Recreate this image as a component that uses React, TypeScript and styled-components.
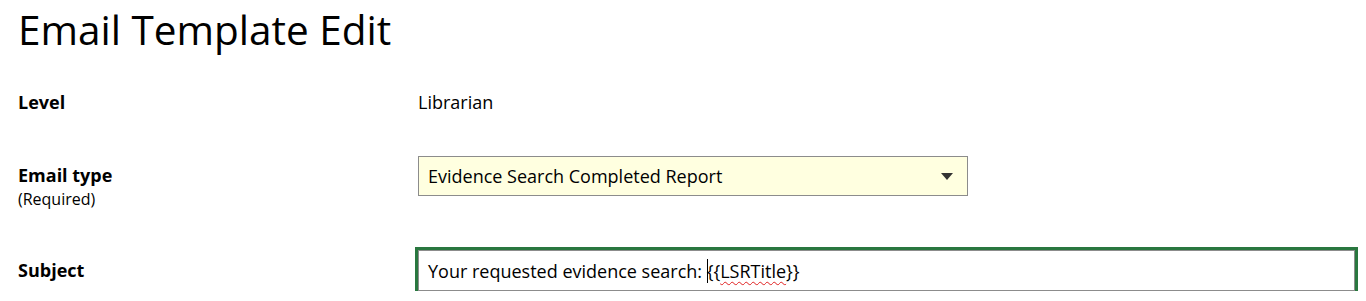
import React from 'react';
import styled, { createGlobalStyle } from 'styled-components';

const GlobalStyle = createGlobalStyle`
  body {
    margin: 0;
    background: #ffffff;
    font-family: 'Open Sans', 'Noto Sans', sans-serif;
    color: #000000;
  }
`;

const Page = styled.main`
  padding: 6px 11px 0 18px;
`;

const Title = styled.h1`
  margin: 0;
  font-size: 40.5px;
  line-height: 48px;
  font-weight: 400;
`;

const Row = styled.div<{ $top: number }>`
  display: grid;
  grid-template-columns: 400px 937px;
  align-items: start;
  margin-top: ${({ $top }) => $top}px;
`;

const Label = styled.div<{ $offset?: number }>`
  padding-top: ${({ $offset }) => $offset ?? 0}px;
  font-size: 18px;
  line-height: 24px;
  font-weight: 700;
`;

const Hint = styled.div`
  margin-top: 1px;
  font-size: 16px;
  line-height: 22px;
  font-weight: 400;
`;

const Value = styled.div`
  font-size: 18px;
  line-height: 24px;
`;

const Select = styled.div`
  display: flex;
  align-items: center;
  justify-content: space-between;
  box-sizing: border-box;
  width: 550px;
  height: 40px;
  padding: 0 14px 0 9px;
  border: 1px solid #8c8c8c;
  background: #ffffe0;
  font-size: 18px;
`;

const Arrow = styled.span`
  width: 0;
  height: 0;
  border-left: 6px solid transparent;
  border-right: 6px solid transparent;
  border-top: 7px solid #333333;
`;

const TextInput = styled.div`
  display: flex;
  align-items: center;
  box-sizing: border-box;
  height: 41px;
  padding: 0 9px;
  border: 1px solid #8c8c8c;
  box-shadow: 0 0 0 3px #29773f;
  background: #ffffff;
  font-size: 18px;
  white-space: pre;
`;

const Caret = styled.span`
  display: inline-block;
  width: 1px;
  height: 24px;
  background: #000000;
  margin-right: -1px;
`;

const Misspelled = styled.span`
  text-decoration: underline wavy #e02020;
  text-decoration-thickness: 1px;
  text-underline-offset: 3px;
`;

export default function App() {
  return (
    <>
      <GlobalStyle />
      <Page>
        <Title>Email Template Edit</Title>
        <Row $top={36}>
          <Label>Level</Label>
          <Value>Librarian</Value>
        </Row>
        <Row $top={42}>
          <Label $offset={7}>
            Email type
            <Hint>(Required)</Hint>
          </Label>
          <Select>
            <span>Evidence Search Completed Report</span>
            <Arrow />
          </Select>
        </Row>
        <Row $top={40}>
          <Label $offset={8}>Subject</Label>
          <TextInput>
            <span>Your requested evidence search: </span>
            <Caret />
            <span>
              {'{{'}
              <Misspelled>LSRTitle</Misspelled>
              {'}}'}
            </span>
          </TextInput>
        </Row>
      </Page>
    </>
  );
}
